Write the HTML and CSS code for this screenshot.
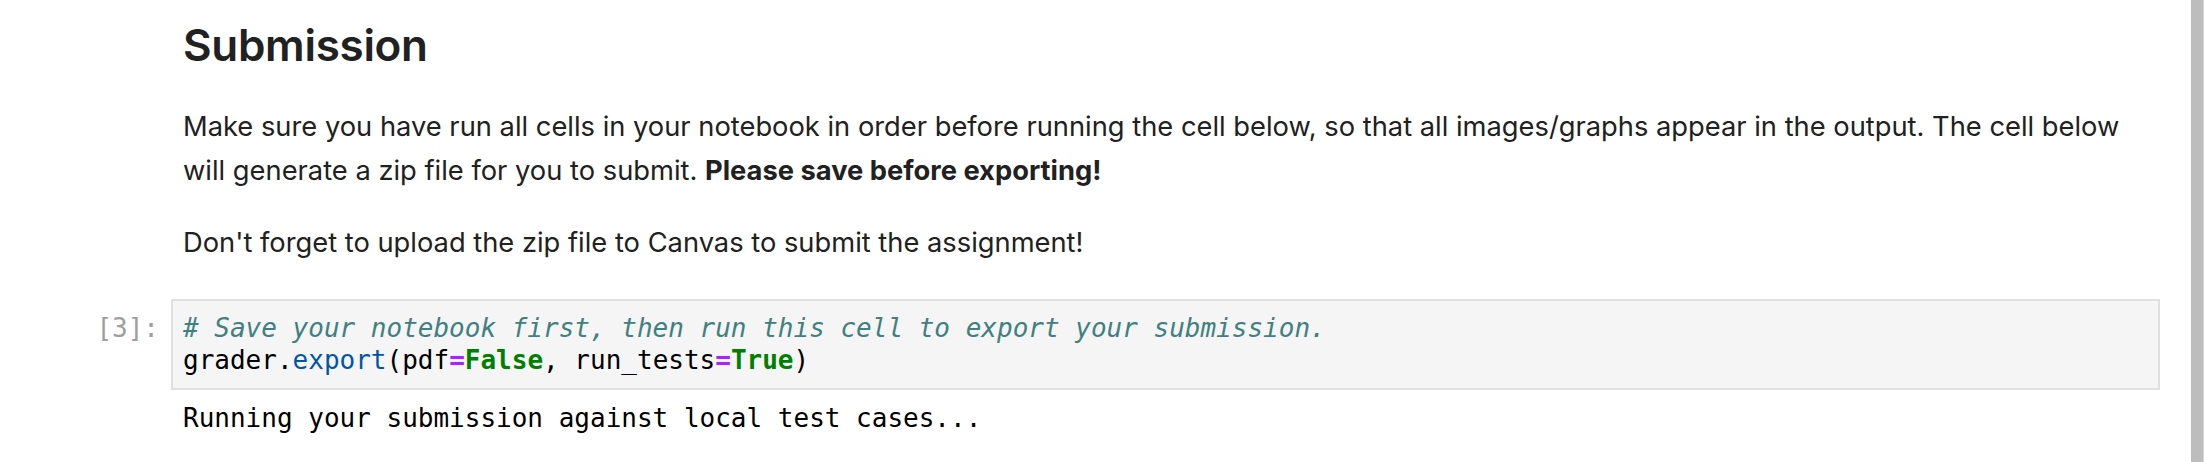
FILE: index.html
```html
<!DOCTYPE html>
<html>
<head>
<meta charset="utf-8">
<link rel="stylesheet" href="styles.css">
</head>
<body>
<div class="window">
  <main class="notebook">
    <section class="md-cell">
      <h2 class="md-h2">Submission</h2>
      <p class="md-p">Make sure you have run all cells in your notebook in order before running the cell below, so that all images/graphs appear in the output. The cell below will generate a zip file for you to submit. <strong>Please save before exporting!</strong></p>
      <p class="md-p md-p-last">Don't forget to upload the zip file to Canvas to submit the assignment!</p>
    </section>
    <section class="code-cell">
      <div class="input-row">
        <div class="prompt">[3]:</div>
        <pre class="editor"><span class="c"># Save your notebook first, then run this cell to export your submission.</span>
grader.<span class="p">export</span>(pdf<span class="o">=</span><span class="k">False</span>, run_tests<span class="o">=</span><span class="k">True</span>)</pre>
      </div>
      <div class="output-row">
        <div class="prompt prompt-empty"></div>
        <pre class="output">Running your submission against local test cases...</pre>
      </div>
    </section>
  </main>
  <div class="scrollbar"></div>
</div>
</body>
</html>
```
FILE: styles.css
```css
html, body {
  margin: 0;
  padding: 0;
  background: #ffffff;
}
body {
  width: 2204px;
  height: 462px;
  overflow: hidden;
}
.window {
  display: flex;
  height: 462px;
}
.notebook {
  flex: 1;
  padding: 0 31px 0 0;
  min-width: 0;
}
.scrollbar {
  width: 13px;
  background: #bdbdbd;
  border-right: 1px solid #d6d6d6;
  box-sizing: border-box;
}
.md-cell {
  padding-left: 183px;
  color: #212121;
  font-family: Inter, "Noto Sans", sans-serif;
}
.md-h2 {
  margin: 0;
  padding-top: 19px;
  font-size: 44px;
  line-height: 53px;
  font-weight: 600;
  letter-spacing: -0.3px;
}
.md-p {
  margin: 33px 0 0 0;
  font-size: 27.3px;
  line-height: 44px;
}
.md-p + .md-p {
  margin-top: 28px;
}
.md-p strong {
  font-weight: 700;
}
.code-cell {
  margin-top: 34px;
}
.input-row, .output-row {
  display: flex;
  align-items: flex-start;
}
.prompt {
  width: 171px;
  flex: none;
  box-sizing: border-box;
  padding-right: 12px;
  padding-top: 13px;
  text-align: right;
  font-family: "DejaVu Sans Mono", monospace;
  font-size: 26px;
  line-height: 32px;
  color: #9e9e9e;
}
.prompt-empty {
  padding-top: 0;
}
.editor {
  flex: 1;
  margin: 0;
  border: 2px solid #e0e0e0;
  background: #f5f5f5;
  padding: 11px 10px 12px 10px;
  font-family: "DejaVu Sans Mono", monospace;
  font-size: 26px;
  line-height: 32px;
  color: #000000;
}
.c { color: #408080; font-style: italic; }
.p { color: #0055aa; }
.o { color: #aa22ff; font-weight: bold; }
.k { color: #008000; font-weight: bold; }
.output {
  margin: 12px 0 0 0;
  padding-left: 12px;
  font-family: "DejaVu Sans Mono", monospace;
  font-size: 26px;
  line-height: 32px;
  color: #000000;
}
```
